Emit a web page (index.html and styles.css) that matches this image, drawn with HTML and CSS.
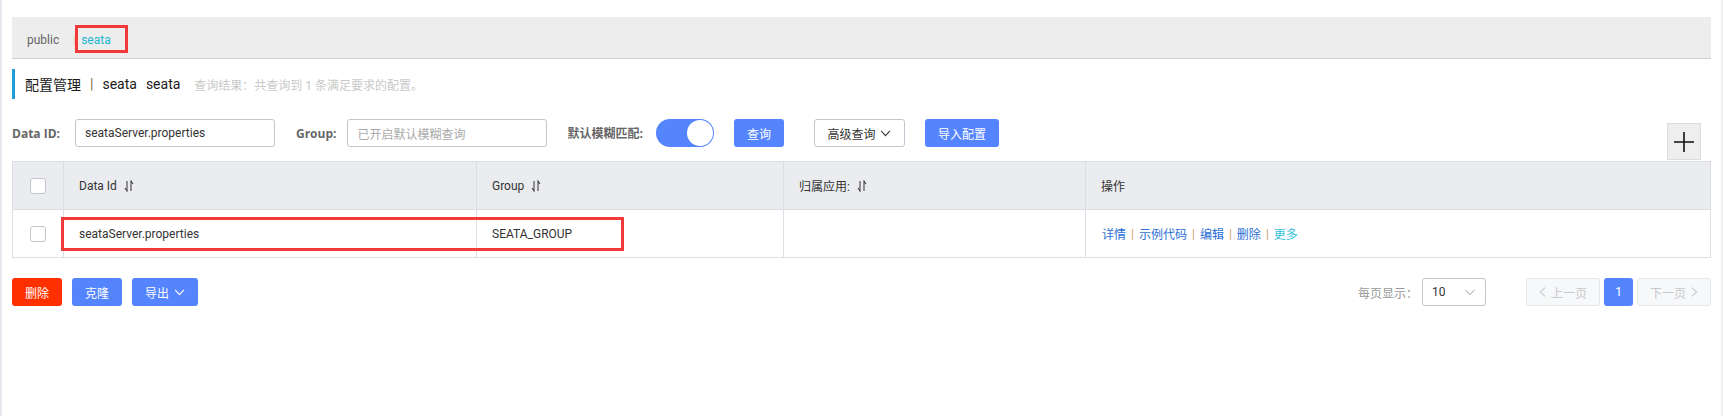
FILE: index.html
```html
<!DOCTYPE html>
<html lang="zh-CN">
<head>
<meta charset="utf-8">
<title>配置管理</title>
<link rel="stylesheet" href="styles.css">
</head>
<body>
<div class="page">
  <div class="tabs">
    <span class="tab">public</span>
    <span class="tab-sep">|</span>
    <span class="tab tab-active">seata</span>
    <span class="mark mark-tab"></span>
  </div>

  <div class="title">
    <span class="title-main">配置管理</span>
    <span class="title-sep">|</span>
    <span class="title-ns">seata</span>
    <span class="title-ns">seata</span>
    <span class="title-sub">查询结果：共查询到 1 条满足要求的配置。</span>
  </div>

  <div class="toolbar">
    <div class="filters">
      <span class="label">Data ID:</span>
      <div class="input input-data">seataServer.properties</div>
      <span class="label label-group">Group:</span>
      <div class="input input-group placeholder">已开启默认模糊查询</div>
      <span class="label label-fuzzy">默认模糊匹配:</span>
      <span class="switch"><span class="knob"></span></span>
      <button class="btn btn-primary btn-query">查询</button>
      <button class="btn btn-normal btn-adv">高级查询
        <svg class="chev" viewBox="0 0 12 8" width="11" height="7"><path d="M1 1l5 5.5L11 1" fill="none" stroke="currentColor" stroke-width="1.2"/></svg>
      </button>
      <button class="btn btn-primary btn-import">导入配置</button>
    </div>
    <button class="add-btn">
      <svg viewBox="0 0 20 20" width="20" height="20"><path d="M10 0v20M0 10h20" stroke="#111" stroke-width="1.6"/></svg>
    </button>
  </div>

  <div class="grid">
    <div class="cell head cb-cell"><span class="checkbox"></span></div>
    <div class="cell head">Data Id<svg class="sort" viewBox="0 0 10 12" width="10" height="12"><path d="M3 1v10L1 8M7 11V1l2 3" fill="none" stroke="#444" stroke-width="1.1"/></svg></div>
    <div class="cell head">Group<svg class="sort" viewBox="0 0 10 12" width="10" height="12"><path d="M3 1v10L1 8M7 11V1l2 3" fill="none" stroke="#444" stroke-width="1.1"/></svg></div>
    <div class="cell head">归属应用:<svg class="sort" viewBox="0 0 10 12" width="10" height="12"><path d="M3 1v10L1 8M7 11V1l2 3" fill="none" stroke="#444" stroke-width="1.1"/></svg></div>
    <div class="cell head last">操作</div>

    <div class="cell body cb-cell"><span class="checkbox"></span></div>
    <div class="cell body">seataServer.properties</div>
    <div class="cell body">SEATA_GROUP</div>
    <div class="cell body"></div>
    <div class="cell body last actions">
      <a class="link">详情</a><span class="sep">|</span><a class="link">示例代码</a><span class="sep">|</span><a class="link">编辑</a><span class="sep">|</span><a class="link">删除</a><span class="sep">|</span><a class="link link-more">更多</a>
    </div>
    <span class="mark mark-row"></span>
  </div>

  <div class="footer">
    <div class="footer-left">
      <button class="btn btn-danger">删除</button>
      <button class="btn btn-primary">克隆</button>
      <button class="btn btn-primary btn-export">导出
        <svg class="chev" viewBox="0 0 12 8" width="11" height="7"><path d="M1 1l5 5.5L11 1" fill="none" stroke="currentColor" stroke-width="1.3"/></svg>
      </button>
    </div>
    <div class="pager">
      <span class="pager-label">每页显示：</span>
      <div class="select">10
        <svg class="chev select-chev" viewBox="0 0 12 8" width="12" height="7"><path d="M1 1l5 5.5L11 1" fill="none" stroke="#999" stroke-width="1.1"/></svg>
      </div>
      <button class="page-btn page-prev">
        <svg viewBox="0 0 8 12" width="7" height="12"><path d="M7 1L1.5 6 7 11" fill="none" stroke="#c8c9cc" stroke-width="1.2"/></svg>上一页</button>
      <button class="page-num">1</button>
      <button class="page-btn page-next">下一页<svg viewBox="0 0 8 12" width="7" height="12"><path d="M1 1l5.5 5L1 11" fill="none" stroke="#c8c9cc" stroke-width="1.2"/></svg></button>
    </div>
  </div>
</div>
</body>
</html>
```

FILE: styles.css
```css
* { box-sizing: border-box; }

html, body {
  margin: 0;
  padding: 0;
  background: #fff;
}

body {
  font-family: Roboto, "Noto Sans CJK SC", sans-serif;
  font-size: 12px;
  color: #333;
  width: 1723px;
  height: 416px;
  overflow: hidden;
}

.page {
  height: 416px;
  border-left: 2px solid #e5e9ee;
  border-right: 2px solid #f0f0f0;
  padding: 17px 10px 0 10px;
}

/* namespace tabs */
.tabs {
  position: relative;
  height: 42px;
  background: #ededed;
  border-bottom: 1px solid #cfcfcf;
  display: flex;
  align-items: center;
  padding: 4px 0 0 15px;
}
.tab {
  color: #666;
  font-size: 12px;
}
.tab-sep {
  color: #e2c8a8;
  margin: 0 5px 0 14px;
  font-size: 12px;
}
.tab-active {
  color: #1fb6d2;
}

.mark {
  position: absolute;
  border: 3px solid #f33a3a;
}
.mark-tab {
  left: 63px;
  top: 8px;
  width: 53px;
  height: 28px;
}

/* title */
.title {
  margin-top: 10px;
  height: 30px;
  border-left: 3px solid #1e9cd7;
  padding-left: 10px;
  display: flex;
  align-items: center;
  font-size: 14px;
  color: #1a1a1a;
}
.title-sep {
  margin: 0 9px 0 9px;
  color: #8a6a40;
}
.title-ns {
  margin-right: 9px;
}
.title-sub {
  margin-left: 5px;
  font-size: 12px;
  color: #c9c9c9;
}

/* toolbar */
.toolbar {
  margin-top: 20px;
  display: flex;
  align-items: flex-start;
}
.filters {
  display: flex;
  align-items: center;
  height: 28px;
}
.label {
  font-family: "Open Sans", "Noto Sans CJK SC", sans-serif;
  font-weight: bold;
  color: #666;
  font-size: 12px;
}
.label-group { margin-left: 21px; }
.label-fuzzy { margin-left: 20px; }

.input {
  height: 28px;
  border: 1px solid #c4c6cf;
  border-radius: 3px;
  display: flex;
  align-items: center;
  padding-left: 9px;
  color: #333;
  font-size: 12px;
}
.input-data {
  width: 200px;
  margin-left: 15px;
}
.input-group {
  width: 200px;
  margin-left: 11px;
}
.placeholder { color: #aaa; }

.switch {
  position: relative;
  width: 58px;
  height: 28px;
  border-radius: 14px;
  background: #5584ff;
  margin-left: 13px;
}
.knob {
  position: absolute;
  right: 1px;
  top: 1px;
  width: 26px;
  height: 26px;
  border-radius: 50%;
  background: #fff;
}

.btn {
  height: 28px;
  border-radius: 3px;
  border: 1px solid transparent;
  font-family: inherit;
  font-size: 12px;
  padding: 0 12px;
  display: inline-flex;
  align-items: center;
  justify-content: center;
  cursor: pointer;
}
.btn-primary {
  background: #5584ff;
  color: #fff;
}
.btn-danger {
  background: #ff3000;
  color: #fff;
}
.btn-normal {
  background: #fff;
  border-color: #c4c6cf;
  color: #333;
}
.btn-query { width: 50px; margin-left: 20px; }
.btn-adv { width: 91px; margin-left: 30px; }
.btn-import { width: 74px; margin-left: 20px; }
.chev { margin-left: 5px; }

.add-btn {
  margin-left: auto;
  margin-top: 4px;
  margin-right: 10px;
  width: 34px;
  height: 37px;
  background: #eeeeee;
  border: 1px solid #dcdcdc;
  display: flex;
  align-items: center;
  justify-content: center;
  padding: 0;
}

/* table */
.grid {
  position: relative;
  margin-top: 1px;
  display: grid;
  grid-template-columns: 51px 413px 307px 302px 1fr;
  border: 1px solid #dcdee3;
}
.cell {
  height: 47px;
  display: flex;
  align-items: center;
  padding-left: 15px;
  border-right: 1px solid #dcdee3;
  font-size: 12px;
  color: #333;
}
.cell.last { border-right: none; }
.head {
  height: 48px;
  background: #ebecf0;
  border-bottom: 1px solid #dcdee3;
}
.cb-cell {
  padding-left: 0;
  justify-content: center;
}
.checkbox {
  width: 16px;
  height: 16px;
  border: 1px solid #c4c6cf;
  border-radius: 3px;
  background: #fff;
}
.sort { margin-left: 7px; }

.actions { padding-left: 16px; }
.link {
  color: #2a6fd6;
}
.link-more { color: #33bde0; }
.sep {
  color: #c9a06a;
  margin: 0 5px;
}

.mark-row {
  left: 48px;
  top: 55px;
  width: 563px;
  height: 34px;
}

/* footer */
.footer {
  margin-top: 20px;
  display: flex;
  align-items: center;
  justify-content: space-between;
}
.footer-left {
  display: flex;
  gap: 10px;
}
.footer-left .btn { width: 50px; padding: 0; }
.footer-left .btn-export { width: 66px; }

.pager {
  display: flex;
  align-items: center;
}
.pager-label {
  color: #999;
  font-size: 12px;
  margin-right: 4px;
}
.select {
  width: 64px;
  height: 28px;
  border: 1px solid #c4c6cf;
  border-radius: 3px;
  display: flex;
  align-items: center;
  padding-left: 9px;
  color: #333;
  font-size: 12px;
}
.select-chev { margin-left: auto; margin-right: 9px; }

.page-btn {
  width: 74px;
  height: 28px;
  background: #f7f8fa;
  border: 1px solid #e6e7eb;
  border-radius: 3px;
  color: #c8c9cc;
  font-family: inherit;
  font-size: 12px;
  display: flex;
  align-items: center;
  justify-content: center;
  gap: 5px;
  padding: 0;
}
.page-prev { margin-left: 40px; }
.page-num {
  width: 29px;
  height: 28px;
  margin: 0 4px;
  background: #5584ff;
  border: none;
  border-radius: 3px;
  color: #fff;
  font-family: inherit;
  font-size: 12px;
  padding: 0;
}
```
